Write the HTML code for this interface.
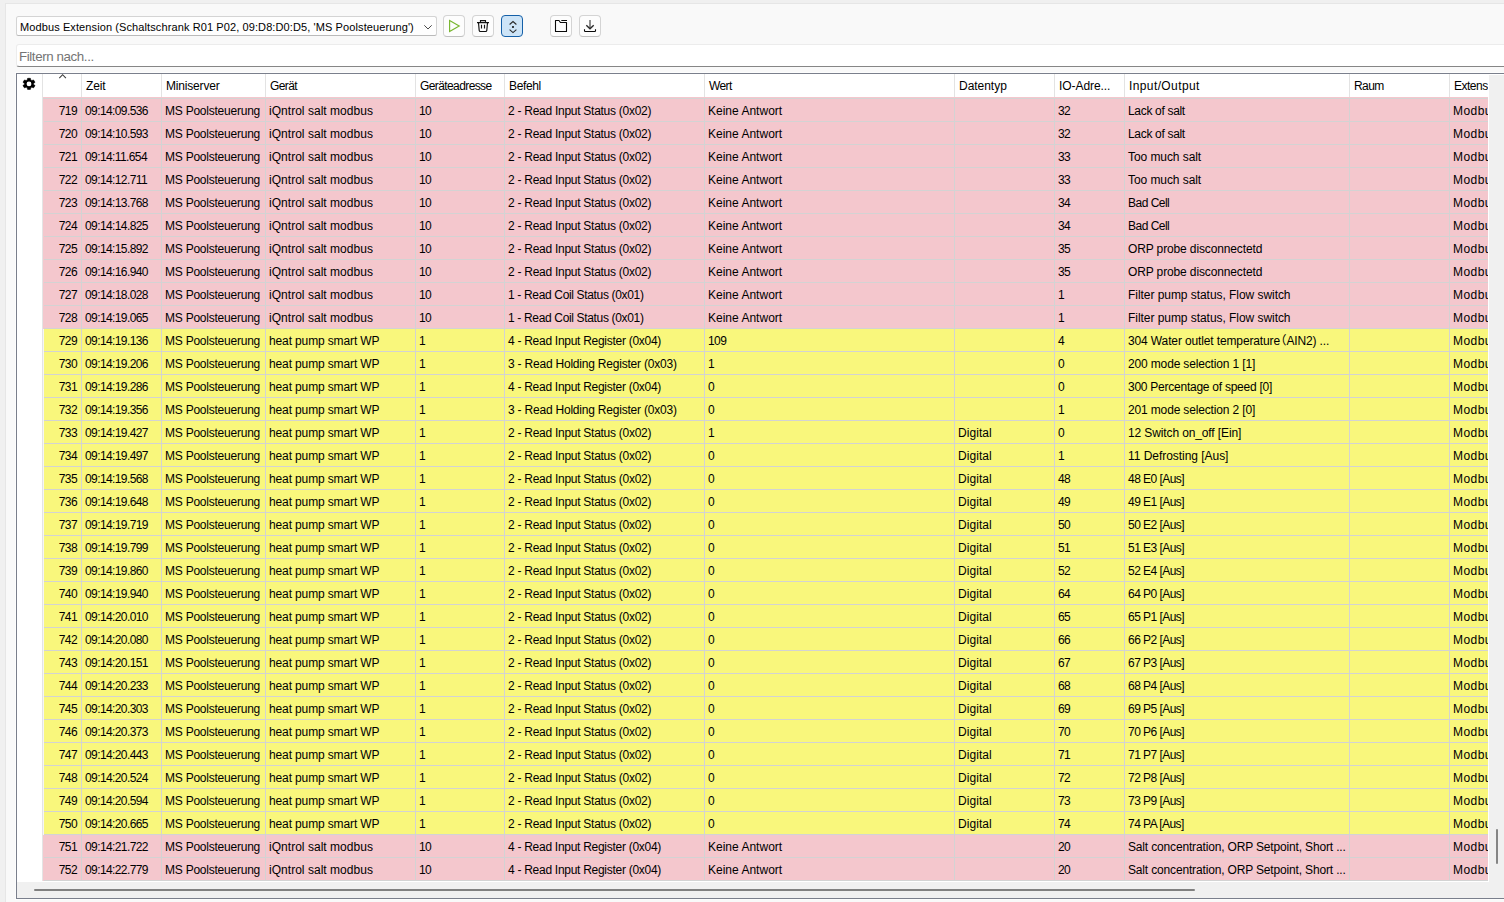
<!DOCTYPE html><html lang="de"><head><meta charset="utf-8"><title>Modbus Monitor</title><style>

*{box-sizing:border-box;margin:0;padding:0}
html,body{width:1504px;height:902px;overflow:hidden;background:#f0f0f0}
body{position:relative;font-family:"Liberation Sans","Noto Sans CJK SC",sans-serif;font-size:12px;color:#000;letter-spacing:-0.15px}
.panel{position:absolute;left:5px;top:3px;width:1510px;height:910px;background:#f9f9f9;border:1px solid #e6e6e6}
.combo{position:absolute;left:16px;top:16px;width:421px;height:20px;background:#fefefe;border:1px solid #d4d4d4;border-bottom-color:#bababa;border-radius:2.5px;line-height:18px;padding:1px 0 0 3px;white-space:nowrap;overflow:hidden;letter-spacing:0.103px;font-size:11px}
.btn{position:absolute;top:15px;width:22px;height:22px;background:#fdfdfd;border:1px solid #d4d4d4;border-bottom-color:#c0c0c0;border-radius:4px}
.btn.on{background:#cde4f7;border:1.5px solid #1560a8}
.ic{position:absolute;top:15px}
.filter{position:absolute;left:16px;top:44px;width:1500px;height:23px;background:#fff;border:1px solid #ececec;border-bottom:1px solid #868686;border-radius:3px 0 0 3px;line-height:21px;padding:1px 0 0 2px;color:#747474;font-size:13.33px;letter-spacing:-0.4px}
.table{position:absolute;left:16px;top:73px;width:1500px;height:826px;background:#fff;border:1px solid #7a7f8c;box-shadow:0 0 0 1px #fdfdfd}
.hd{position:absolute;top:74px;height:23px;line-height:23px;white-space:nowrap;overflow:hidden;border-left:1px solid #e3e3e3;padding:1px 0 0 4px;background:#fff}
.row{position:absolute;left:43px;width:1445px;height:23px;overflow:hidden}
.row.y{box-shadow:inset 1px 0 0 #f6f6f4}
.row i{position:absolute;left:1px;top:22px;width:100%;height:1px;background:#d3d3d3}
.c{position:absolute;top:0;height:22px;line-height:22px;white-space:nowrap;overflow:hidden;border-left:1px solid #d3d3d3;padding:1px 0 0 3px}
.c.n{border-left:none;text-align:right;padding:1px 4px 0 0}
.vs{position:absolute;left:1489px;top:75px;width:15px;height:823px;background:#f0f0f0}
.hs{position:absolute;left:17px;top:882px;width:1487px;height:16px;background:#f0f0f0}

</style></head><body>
<div class="panel"></div>
<div class="combo">Modbus Extension (Schaltschrank R01 P02, 09:D8:D0:D5, 'MS Poolsteuerung')</div>
<svg style="position:absolute;left:422px;top:22px" width="12" height="10" viewBox="0 0 12 10"><path d="M2.3 3.3 L6 7 L9.7 3.3" fill="none" stroke="#4a4a4a" stroke-width="1"/></svg>
<div class="btn" style="left:443px"></div>
<div class="btn" style="left:472px"></div>
<div class="btn on" style="left:501px"></div>
<div class="btn" style="left:550px"></div>
<div class="btn" style="left:579px"></div>
<svg class="ic" style="left:443px" width="22" height="22" viewBox="0 0 22 22"><path d="M6.6 5.6 L16.2 11 L6.6 16.4 Z" fill="none" stroke="#78b62e" stroke-width="1.15" stroke-linejoin="miter"/></svg>
<svg class="ic" style="left:472px" width="22" height="22" viewBox="0 0 22 22"><path d="M5 7.6H17M8.5 7.4V5.6H13.5V7.4M6.5 7.8 L7.2 15.4 Q7.3 16.5 8.4 16.5 H13.6 Q14.7 16.5 14.8 15.4 L15.5 7.8M9.5 9.8V13.6M12.5 9.8V13.6" fill="none" stroke="#111" stroke-width="1.15"/></svg>
<svg class="ic" style="left:501px" width="22" height="22" viewBox="0 0 22 22"><path d="M8.6 9.5 L12 6.5 L15.4 9.5M8.6 14.6 L12 17.6 L15.4 14.6" fill="none" stroke="#2a2a2a" stroke-width="1.1"/><circle cx="12" cy="12.05" r="1.05" fill="#111"/></svg>
<svg class="ic" style="left:550px" width="22" height="22" viewBox="0 0 22 22"><path d="M5.5 5.5H9L10.4 7.5H16.5V16.5H5.5Z M11.3 5.5H17" fill="none" stroke="#0a0a0a" stroke-width="1.1" stroke-linejoin="round"/></svg>
<svg class="ic" style="left:579px" width="22" height="22" viewBox="0 0 22 22"><path d="M11 5V13" fill="none" stroke="#6a6a6a" stroke-width="1.5"/><path d="M7.3 10.2 L11 13.7 L14.7 10.2" fill="none" stroke="#2a2a2a" stroke-width="1.4"/><path d="M5.5 14.2V15.8Q5.5 16.5 6.2 16.5H15.8Q16.5 16.5 16.5 15.8V14.2" fill="none" stroke="#0a0a0a" stroke-width="1.1"/></svg>
<div class="filter">Filtern nach...</div>
<div class="table"></div>
<svg style="position:absolute;left:22px;top:77px" width="14" height="14" viewBox="0 0 14 14"><g transform="translate(7.0 6.9) scale(0.64 0.583) translate(-12 -12)"><path fill="#000" stroke="#000" stroke-width="0.9" stroke-linejoin="round" d="M19.14 12.94c.04-.3.06-.61.06-.94 0-.32-.02-.64-.07-.94l2.03-1.58a.49.49 0 0 0 .12-.61l-1.92-3.32a.488.488 0 0 0-.59-.22l-2.39.96c-.5-.38-1.03-.7-1.62-.94l-.36-2.54a.484.484 0 0 0-.48-.41h-3.84c-.24 0-.43.17-.47.41l-.36 2.54c-.59.24-1.13.57-1.62.94l-2.39-.96c-.22-.08-.47 0-.59.22L2.74 8.87c-.12.21-.08.47.12.61l2.03 1.58c-.05.3-.09.63-.09.94s.02.64.07.94l-2.03 1.58a.49.49 0 0 0-.12.61l1.92 3.32c.12.22.37.29.59.22l2.39-.96c.5.38 1.03.7 1.62.94l.36 2.54c.05.24.24.41.48.41h3.84c.24 0 .44-.17.47-.41l.36-2.54c.59-.24 1.13-.56 1.62-.94l2.39.96c.22.08.47 0 .59-.22l1.92-3.32c.12-.22.07-.47-.12-.61l-2.01-1.58z"/><ellipse cx="12" cy="12" rx="3.75" ry="4.1" fill="#fff"/></g></svg>
<div class="hd" style="left:42px;width:39px"></div>
<div class="hd" style="left:81px;width:80px;letter-spacing:-0.17px">Zeit</div>
<div class="hd" style="left:161px;width:104px;letter-spacing:-0.18px">Miniserver</div>
<div class="hd" style="left:265px;width:150px;letter-spacing:-0.60px">Gerät</div>
<div class="hd" style="left:415px;width:89px;letter-spacing:-0.60px">Geräteadresse</div>
<div class="hd" style="left:504px;width:200px;letter-spacing:-0.37px">Befehl</div>
<div class="hd" style="left:704px;width:250px;letter-spacing:-0.60px">Wert</div>
<div class="hd" style="left:954px;width:100px;letter-spacing:-0.03px">Datentyp</div>
<div class="hd" style="left:1054px;width:70px;letter-spacing:-0.07px">IO-Adre...</div>
<div class="hd" style="left:1124px;width:225px;letter-spacing:0.39px">Input/Output</div>
<div class="hd" style="left:1349px;width:100px;letter-spacing:-0.60px">Raum</div>
<div class="hd" style="left:1449px;width:39px;letter-spacing:-0.50px">Extension</div>
<svg style="position:absolute;left:57px;top:72px" width="12" height="8" viewBox="0 0 12 8"><path d="M2.3 6.2 L5.6 2.7 L8.9 6.2" fill="none" stroke="#3c3c3c" stroke-width="1.1"/></svg>
<div style="position:absolute;left:42px;top:97px;width:1px;height:784px;background:#e4e4e4"></div>
<div style="position:absolute;left:43px;top:97px;width:1445px;height:1px;background:#f4c7cd"></div>
<div style="position:absolute;left:43px;top:98px;width:1445px;height:1px;background:#d4d4d4"></div>
<div class="row" style="top:99px;background:#f4c7cd"><div class="c n" style="left:0;width:38px;letter-spacing:-0.60px">719</div><div class="c" style="left:38px;width:80px;letter-spacing:-0.60px">09:14:09.536</div><div class="c" style="left:118px;width:104px;letter-spacing:-0.23px">MS Poolsteuerung</div><div class="c" style="left:222px;width:150px;letter-spacing:0.03px">iQntrol salt modbus</div><div class="c" style="left:372px;width:89px;letter-spacing:-0.60px">10</div><div class="c" style="left:461px;width:200px;letter-spacing:-0.27px">2 - Read Input Status (0x02)</div><div class="c" style="left:661px;width:250px;letter-spacing:0.01px">Keine Antwort</div><div class="c" style="left:911px;width:100px"></div><div class="c" style="left:1011px;width:70px;letter-spacing:-0.60px">32</div><div class="c" style="left:1081px;width:225px;letter-spacing:-0.32px">Lack of salt</div><div class="c" style="left:1306px;width:100px"></div><div class="c" style="left:1406px;width:39px;letter-spacing:0.45px">Modbus</div><i></i></div>
<div class="row" style="top:122px;background:#f4c7cd"><div class="c n" style="left:0;width:38px;letter-spacing:-0.60px">720</div><div class="c" style="left:38px;width:80px;letter-spacing:-0.60px">09:14:10.593</div><div class="c" style="left:118px;width:104px;letter-spacing:-0.23px">MS Poolsteuerung</div><div class="c" style="left:222px;width:150px;letter-spacing:0.03px">iQntrol salt modbus</div><div class="c" style="left:372px;width:89px;letter-spacing:-0.60px">10</div><div class="c" style="left:461px;width:200px;letter-spacing:-0.27px">2 - Read Input Status (0x02)</div><div class="c" style="left:661px;width:250px;letter-spacing:0.01px">Keine Antwort</div><div class="c" style="left:911px;width:100px"></div><div class="c" style="left:1011px;width:70px;letter-spacing:-0.60px">32</div><div class="c" style="left:1081px;width:225px;letter-spacing:-0.32px">Lack of salt</div><div class="c" style="left:1306px;width:100px"></div><div class="c" style="left:1406px;width:39px;letter-spacing:0.45px">Modbus</div><i></i></div>
<div class="row" style="top:145px;background:#f4c7cd"><div class="c n" style="left:0;width:38px;letter-spacing:-0.60px">721</div><div class="c" style="left:38px;width:80px;letter-spacing:-0.60px">09:14:11.654</div><div class="c" style="left:118px;width:104px;letter-spacing:-0.23px">MS Poolsteuerung</div><div class="c" style="left:222px;width:150px;letter-spacing:0.03px">iQntrol salt modbus</div><div class="c" style="left:372px;width:89px;letter-spacing:-0.60px">10</div><div class="c" style="left:461px;width:200px;letter-spacing:-0.27px">2 - Read Input Status (0x02)</div><div class="c" style="left:661px;width:250px;letter-spacing:0.01px">Keine Antwort</div><div class="c" style="left:911px;width:100px"></div><div class="c" style="left:1011px;width:70px;letter-spacing:-0.60px">33</div><div class="c" style="left:1081px;width:225px;letter-spacing:-0.07px">Too much salt</div><div class="c" style="left:1306px;width:100px"></div><div class="c" style="left:1406px;width:39px;letter-spacing:0.45px">Modbus</div><i></i></div>
<div class="row" style="top:168px;background:#f4c7cd"><div class="c n" style="left:0;width:38px;letter-spacing:-0.60px">722</div><div class="c" style="left:38px;width:80px;letter-spacing:-0.60px">09:14:12.711</div><div class="c" style="left:118px;width:104px;letter-spacing:-0.23px">MS Poolsteuerung</div><div class="c" style="left:222px;width:150px;letter-spacing:0.03px">iQntrol salt modbus</div><div class="c" style="left:372px;width:89px;letter-spacing:-0.60px">10</div><div class="c" style="left:461px;width:200px;letter-spacing:-0.27px">2 - Read Input Status (0x02)</div><div class="c" style="left:661px;width:250px;letter-spacing:0.01px">Keine Antwort</div><div class="c" style="left:911px;width:100px"></div><div class="c" style="left:1011px;width:70px;letter-spacing:-0.60px">33</div><div class="c" style="left:1081px;width:225px;letter-spacing:-0.07px">Too much salt</div><div class="c" style="left:1306px;width:100px"></div><div class="c" style="left:1406px;width:39px;letter-spacing:0.45px">Modbus</div><i></i></div>
<div class="row" style="top:191px;background:#f4c7cd"><div class="c n" style="left:0;width:38px;letter-spacing:-0.60px">723</div><div class="c" style="left:38px;width:80px;letter-spacing:-0.60px">09:14:13.768</div><div class="c" style="left:118px;width:104px;letter-spacing:-0.23px">MS Poolsteuerung</div><div class="c" style="left:222px;width:150px;letter-spacing:0.03px">iQntrol salt modbus</div><div class="c" style="left:372px;width:89px;letter-spacing:-0.60px">10</div><div class="c" style="left:461px;width:200px;letter-spacing:-0.27px">2 - Read Input Status (0x02)</div><div class="c" style="left:661px;width:250px;letter-spacing:0.01px">Keine Antwort</div><div class="c" style="left:911px;width:100px"></div><div class="c" style="left:1011px;width:70px;letter-spacing:-0.60px">34</div><div class="c" style="left:1081px;width:225px;letter-spacing:-0.51px">Bad Cell</div><div class="c" style="left:1306px;width:100px"></div><div class="c" style="left:1406px;width:39px;letter-spacing:0.45px">Modbus</div><i></i></div>
<div class="row" style="top:214px;background:#f4c7cd"><div class="c n" style="left:0;width:38px;letter-spacing:-0.60px">724</div><div class="c" style="left:38px;width:80px;letter-spacing:-0.60px">09:14:14.825</div><div class="c" style="left:118px;width:104px;letter-spacing:-0.23px">MS Poolsteuerung</div><div class="c" style="left:222px;width:150px;letter-spacing:0.03px">iQntrol salt modbus</div><div class="c" style="left:372px;width:89px;letter-spacing:-0.60px">10</div><div class="c" style="left:461px;width:200px;letter-spacing:-0.27px">2 - Read Input Status (0x02)</div><div class="c" style="left:661px;width:250px;letter-spacing:0.01px">Keine Antwort</div><div class="c" style="left:911px;width:100px"></div><div class="c" style="left:1011px;width:70px;letter-spacing:-0.60px">34</div><div class="c" style="left:1081px;width:225px;letter-spacing:-0.51px">Bad Cell</div><div class="c" style="left:1306px;width:100px"></div><div class="c" style="left:1406px;width:39px;letter-spacing:0.45px">Modbus</div><i></i></div>
<div class="row" style="top:237px;background:#f4c7cd"><div class="c n" style="left:0;width:38px;letter-spacing:-0.60px">725</div><div class="c" style="left:38px;width:80px;letter-spacing:-0.60px">09:14:15.892</div><div class="c" style="left:118px;width:104px;letter-spacing:-0.23px">MS Poolsteuerung</div><div class="c" style="left:222px;width:150px;letter-spacing:0.03px">iQntrol salt modbus</div><div class="c" style="left:372px;width:89px;letter-spacing:-0.60px">10</div><div class="c" style="left:461px;width:200px;letter-spacing:-0.27px">2 - Read Input Status (0x02)</div><div class="c" style="left:661px;width:250px;letter-spacing:0.01px">Keine Antwort</div><div class="c" style="left:911px;width:100px"></div><div class="c" style="left:1011px;width:70px;letter-spacing:-0.60px">35</div><div class="c" style="left:1081px;width:225px;letter-spacing:-0.13px">ORP probe disconnectetd</div><div class="c" style="left:1306px;width:100px"></div><div class="c" style="left:1406px;width:39px;letter-spacing:0.45px">Modbus</div><i></i></div>
<div class="row" style="top:260px;background:#f4c7cd"><div class="c n" style="left:0;width:38px;letter-spacing:-0.60px">726</div><div class="c" style="left:38px;width:80px;letter-spacing:-0.60px">09:14:16.940</div><div class="c" style="left:118px;width:104px;letter-spacing:-0.23px">MS Poolsteuerung</div><div class="c" style="left:222px;width:150px;letter-spacing:0.03px">iQntrol salt modbus</div><div class="c" style="left:372px;width:89px;letter-spacing:-0.60px">10</div><div class="c" style="left:461px;width:200px;letter-spacing:-0.27px">2 - Read Input Status (0x02)</div><div class="c" style="left:661px;width:250px;letter-spacing:0.01px">Keine Antwort</div><div class="c" style="left:911px;width:100px"></div><div class="c" style="left:1011px;width:70px;letter-spacing:-0.60px">35</div><div class="c" style="left:1081px;width:225px;letter-spacing:-0.13px">ORP probe disconnectetd</div><div class="c" style="left:1306px;width:100px"></div><div class="c" style="left:1406px;width:39px;letter-spacing:0.45px">Modbus</div><i></i></div>
<div class="row" style="top:283px;background:#f4c7cd"><div class="c n" style="left:0;width:38px;letter-spacing:-0.60px">727</div><div class="c" style="left:38px;width:80px;letter-spacing:-0.60px">09:14:18.028</div><div class="c" style="left:118px;width:104px;letter-spacing:-0.23px">MS Poolsteuerung</div><div class="c" style="left:222px;width:150px;letter-spacing:0.03px">iQntrol salt modbus</div><div class="c" style="left:372px;width:89px;letter-spacing:-0.60px">10</div><div class="c" style="left:461px;width:200px;letter-spacing:-0.34px">1 - Read Coil Status (0x01)</div><div class="c" style="left:661px;width:250px;letter-spacing:0.01px">Keine Antwort</div><div class="c" style="left:911px;width:100px"></div><div class="c" style="left:1011px;width:70px;letter-spacing:-0.60px">1</div><div class="c" style="left:1081px;width:225px;letter-spacing:-0.05px">Filter pump status, Flow switch</div><div class="c" style="left:1306px;width:100px"></div><div class="c" style="left:1406px;width:39px;letter-spacing:0.45px">Modbus</div><i></i></div>
<div class="row" style="top:306px;background:#f4c7cd"><div class="c n" style="left:0;width:38px;letter-spacing:-0.60px">728</div><div class="c" style="left:38px;width:80px;letter-spacing:-0.60px">09:14:19.065</div><div class="c" style="left:118px;width:104px;letter-spacing:-0.23px">MS Poolsteuerung</div><div class="c" style="left:222px;width:150px;letter-spacing:0.03px">iQntrol salt modbus</div><div class="c" style="left:372px;width:89px;letter-spacing:-0.60px">10</div><div class="c" style="left:461px;width:200px;letter-spacing:-0.34px">1 - Read Coil Status (0x01)</div><div class="c" style="left:661px;width:250px;letter-spacing:0.01px">Keine Antwort</div><div class="c" style="left:911px;width:100px"></div><div class="c" style="left:1011px;width:70px;letter-spacing:-0.60px">1</div><div class="c" style="left:1081px;width:225px;letter-spacing:-0.05px">Filter pump status, Flow switch</div><div class="c" style="left:1306px;width:100px"></div><div class="c" style="left:1406px;width:39px;letter-spacing:0.45px">Modbus</div><i></i></div>
<div class="row y" style="top:329px;background:#f9f77c"><div class="c n" style="left:0;width:38px;letter-spacing:-0.60px">729</div><div class="c" style="left:38px;width:80px;letter-spacing:-0.60px">09:14:19.136</div><div class="c" style="left:118px;width:104px;letter-spacing:-0.23px">MS Poolsteuerung</div><div class="c" style="left:222px;width:150px;letter-spacing:-0.13px">heat pump smart WP</div><div class="c" style="left:372px;width:89px;letter-spacing:-0.60px">1</div><div class="c" style="left:461px;width:200px;letter-spacing:-0.28px">4 - Read Input Register (0x04)</div><div class="c" style="left:661px;width:250px;letter-spacing:-0.60px">109</div><div class="c" style="left:911px;width:100px"></div><div class="c" style="left:1011px;width:70px;letter-spacing:-0.60px">4</div><div class="c" style="left:1081px;width:225px;letter-spacing:-0.13px">304 Water outlet temperature<span style="margin-left:-5.5px">（</span>AIN2) ...</div><div class="c" style="left:1306px;width:100px"></div><div class="c" style="left:1406px;width:39px;letter-spacing:0.45px">Modbus</div><i></i></div>
<div class="row y" style="top:352px;background:#f9f77c"><div class="c n" style="left:0;width:38px;letter-spacing:-0.60px">730</div><div class="c" style="left:38px;width:80px;letter-spacing:-0.60px">09:14:19.206</div><div class="c" style="left:118px;width:104px;letter-spacing:-0.23px">MS Poolsteuerung</div><div class="c" style="left:222px;width:150px;letter-spacing:-0.13px">heat pump smart WP</div><div class="c" style="left:372px;width:89px;letter-spacing:-0.60px">1</div><div class="c" style="left:461px;width:200px;letter-spacing:-0.21px">3 - Read Holding Register (0x03)</div><div class="c" style="left:661px;width:250px;letter-spacing:-0.60px">1</div><div class="c" style="left:911px;width:100px"></div><div class="c" style="left:1011px;width:70px;letter-spacing:-0.60px">0</div><div class="c" style="left:1081px;width:225px;letter-spacing:-0.15px">200 mode selection 1 [1]</div><div class="c" style="left:1306px;width:100px"></div><div class="c" style="left:1406px;width:39px;letter-spacing:0.45px">Modbus</div><i></i></div>
<div class="row y" style="top:375px;background:#f9f77c"><div class="c n" style="left:0;width:38px;letter-spacing:-0.60px">731</div><div class="c" style="left:38px;width:80px;letter-spacing:-0.60px">09:14:19.286</div><div class="c" style="left:118px;width:104px;letter-spacing:-0.23px">MS Poolsteuerung</div><div class="c" style="left:222px;width:150px;letter-spacing:-0.13px">heat pump smart WP</div><div class="c" style="left:372px;width:89px;letter-spacing:-0.60px">1</div><div class="c" style="left:461px;width:200px;letter-spacing:-0.28px">4 - Read Input Register (0x04)</div><div class="c" style="left:661px;width:250px;letter-spacing:-0.60px">0</div><div class="c" style="left:911px;width:100px"></div><div class="c" style="left:1011px;width:70px;letter-spacing:-0.60px">0</div><div class="c" style="left:1081px;width:225px;letter-spacing:-0.25px">300 Percentage of speed [0]</div><div class="c" style="left:1306px;width:100px"></div><div class="c" style="left:1406px;width:39px;letter-spacing:0.45px">Modbus</div><i></i></div>
<div class="row y" style="top:398px;background:#f9f77c"><div class="c n" style="left:0;width:38px;letter-spacing:-0.60px">732</div><div class="c" style="left:38px;width:80px;letter-spacing:-0.60px">09:14:19.356</div><div class="c" style="left:118px;width:104px;letter-spacing:-0.23px">MS Poolsteuerung</div><div class="c" style="left:222px;width:150px;letter-spacing:-0.13px">heat pump smart WP</div><div class="c" style="left:372px;width:89px;letter-spacing:-0.60px">1</div><div class="c" style="left:461px;width:200px;letter-spacing:-0.21px">3 - Read Holding Register (0x03)</div><div class="c" style="left:661px;width:250px;letter-spacing:-0.60px">0</div><div class="c" style="left:911px;width:100px"></div><div class="c" style="left:1011px;width:70px;letter-spacing:-0.60px">1</div><div class="c" style="left:1081px;width:225px;letter-spacing:-0.15px">201 mode selection 2 [0]</div><div class="c" style="left:1306px;width:100px"></div><div class="c" style="left:1406px;width:39px;letter-spacing:0.45px">Modbus</div><i></i></div>
<div class="row y" style="top:421px;background:#f9f77c"><div class="c n" style="left:0;width:38px;letter-spacing:-0.60px">733</div><div class="c" style="left:38px;width:80px;letter-spacing:-0.60px">09:14:19.427</div><div class="c" style="left:118px;width:104px;letter-spacing:-0.23px">MS Poolsteuerung</div><div class="c" style="left:222px;width:150px;letter-spacing:-0.13px">heat pump smart WP</div><div class="c" style="left:372px;width:89px;letter-spacing:-0.60px">1</div><div class="c" style="left:461px;width:200px;letter-spacing:-0.27px">2 - Read Input Status (0x02)</div><div class="c" style="left:661px;width:250px;letter-spacing:-0.60px">1</div><div class="c" style="left:911px;width:100px;letter-spacing:0.07px">Digital</div><div class="c" style="left:1011px;width:70px;letter-spacing:-0.60px">0</div><div class="c" style="left:1081px;width:225px;letter-spacing:-0.12px">12 Switch on_off [Ein]</div><div class="c" style="left:1306px;width:100px"></div><div class="c" style="left:1406px;width:39px;letter-spacing:0.45px">Modbus</div><i></i></div>
<div class="row y" style="top:444px;background:#f9f77c"><div class="c n" style="left:0;width:38px;letter-spacing:-0.60px">734</div><div class="c" style="left:38px;width:80px;letter-spacing:-0.60px">09:14:19.497</div><div class="c" style="left:118px;width:104px;letter-spacing:-0.23px">MS Poolsteuerung</div><div class="c" style="left:222px;width:150px;letter-spacing:-0.13px">heat pump smart WP</div><div class="c" style="left:372px;width:89px;letter-spacing:-0.60px">1</div><div class="c" style="left:461px;width:200px;letter-spacing:-0.27px">2 - Read Input Status (0x02)</div><div class="c" style="left:661px;width:250px;letter-spacing:-0.60px">0</div><div class="c" style="left:911px;width:100px;letter-spacing:0.07px">Digital</div><div class="c" style="left:1011px;width:70px;letter-spacing:-0.60px">1</div><div class="c" style="left:1081px;width:225px;letter-spacing:-0.04px">11 Defrosting [Aus]</div><div class="c" style="left:1306px;width:100px"></div><div class="c" style="left:1406px;width:39px;letter-spacing:0.45px">Modbus</div><i></i></div>
<div class="row y" style="top:467px;background:#f9f77c"><div class="c n" style="left:0;width:38px;letter-spacing:-0.60px">735</div><div class="c" style="left:38px;width:80px;letter-spacing:-0.60px">09:14:19.568</div><div class="c" style="left:118px;width:104px;letter-spacing:-0.23px">MS Poolsteuerung</div><div class="c" style="left:222px;width:150px;letter-spacing:-0.13px">heat pump smart WP</div><div class="c" style="left:372px;width:89px;letter-spacing:-0.60px">1</div><div class="c" style="left:461px;width:200px;letter-spacing:-0.27px">2 - Read Input Status (0x02)</div><div class="c" style="left:661px;width:250px;letter-spacing:-0.60px">0</div><div class="c" style="left:911px;width:100px;letter-spacing:0.07px">Digital</div><div class="c" style="left:1011px;width:70px;letter-spacing:-0.60px">48</div><div class="c" style="left:1081px;width:225px;letter-spacing:-0.54px">48 E0 [Aus]</div><div class="c" style="left:1306px;width:100px"></div><div class="c" style="left:1406px;width:39px;letter-spacing:0.45px">Modbus</div><i></i></div>
<div class="row y" style="top:490px;background:#f9f77c"><div class="c n" style="left:0;width:38px;letter-spacing:-0.60px">736</div><div class="c" style="left:38px;width:80px;letter-spacing:-0.60px">09:14:19.648</div><div class="c" style="left:118px;width:104px;letter-spacing:-0.23px">MS Poolsteuerung</div><div class="c" style="left:222px;width:150px;letter-spacing:-0.13px">heat pump smart WP</div><div class="c" style="left:372px;width:89px;letter-spacing:-0.60px">1</div><div class="c" style="left:461px;width:200px;letter-spacing:-0.27px">2 - Read Input Status (0x02)</div><div class="c" style="left:661px;width:250px;letter-spacing:-0.60px">0</div><div class="c" style="left:911px;width:100px;letter-spacing:0.07px">Digital</div><div class="c" style="left:1011px;width:70px;letter-spacing:-0.60px">49</div><div class="c" style="left:1081px;width:225px;letter-spacing:-0.54px">49 E1 [Aus]</div><div class="c" style="left:1306px;width:100px"></div><div class="c" style="left:1406px;width:39px;letter-spacing:0.45px">Modbus</div><i></i></div>
<div class="row y" style="top:513px;background:#f9f77c"><div class="c n" style="left:0;width:38px;letter-spacing:-0.60px">737</div><div class="c" style="left:38px;width:80px;letter-spacing:-0.60px">09:14:19.719</div><div class="c" style="left:118px;width:104px;letter-spacing:-0.23px">MS Poolsteuerung</div><div class="c" style="left:222px;width:150px;letter-spacing:-0.13px">heat pump smart WP</div><div class="c" style="left:372px;width:89px;letter-spacing:-0.60px">1</div><div class="c" style="left:461px;width:200px;letter-spacing:-0.27px">2 - Read Input Status (0x02)</div><div class="c" style="left:661px;width:250px;letter-spacing:-0.60px">0</div><div class="c" style="left:911px;width:100px;letter-spacing:0.07px">Digital</div><div class="c" style="left:1011px;width:70px;letter-spacing:-0.60px">50</div><div class="c" style="left:1081px;width:225px;letter-spacing:-0.54px">50 E2 [Aus]</div><div class="c" style="left:1306px;width:100px"></div><div class="c" style="left:1406px;width:39px;letter-spacing:0.45px">Modbus</div><i></i></div>
<div class="row y" style="top:536px;background:#f9f77c"><div class="c n" style="left:0;width:38px;letter-spacing:-0.60px">738</div><div class="c" style="left:38px;width:80px;letter-spacing:-0.60px">09:14:19.799</div><div class="c" style="left:118px;width:104px;letter-spacing:-0.23px">MS Poolsteuerung</div><div class="c" style="left:222px;width:150px;letter-spacing:-0.13px">heat pump smart WP</div><div class="c" style="left:372px;width:89px;letter-spacing:-0.60px">1</div><div class="c" style="left:461px;width:200px;letter-spacing:-0.27px">2 - Read Input Status (0x02)</div><div class="c" style="left:661px;width:250px;letter-spacing:-0.60px">0</div><div class="c" style="left:911px;width:100px;letter-spacing:0.07px">Digital</div><div class="c" style="left:1011px;width:70px;letter-spacing:-0.60px">51</div><div class="c" style="left:1081px;width:225px;letter-spacing:-0.54px">51 E3 [Aus]</div><div class="c" style="left:1306px;width:100px"></div><div class="c" style="left:1406px;width:39px;letter-spacing:0.45px">Modbus</div><i></i></div>
<div class="row y" style="top:559px;background:#f9f77c"><div class="c n" style="left:0;width:38px;letter-spacing:-0.60px">739</div><div class="c" style="left:38px;width:80px;letter-spacing:-0.60px">09:14:19.860</div><div class="c" style="left:118px;width:104px;letter-spacing:-0.23px">MS Poolsteuerung</div><div class="c" style="left:222px;width:150px;letter-spacing:-0.13px">heat pump smart WP</div><div class="c" style="left:372px;width:89px;letter-spacing:-0.60px">1</div><div class="c" style="left:461px;width:200px;letter-spacing:-0.27px">2 - Read Input Status (0x02)</div><div class="c" style="left:661px;width:250px;letter-spacing:-0.60px">0</div><div class="c" style="left:911px;width:100px;letter-spacing:0.07px">Digital</div><div class="c" style="left:1011px;width:70px;letter-spacing:-0.60px">52</div><div class="c" style="left:1081px;width:225px;letter-spacing:-0.54px">52 E4 [Aus]</div><div class="c" style="left:1306px;width:100px"></div><div class="c" style="left:1406px;width:39px;letter-spacing:0.45px">Modbus</div><i></i></div>
<div class="row y" style="top:582px;background:#f9f77c"><div class="c n" style="left:0;width:38px;letter-spacing:-0.60px">740</div><div class="c" style="left:38px;width:80px;letter-spacing:-0.60px">09:14:19.940</div><div class="c" style="left:118px;width:104px;letter-spacing:-0.23px">MS Poolsteuerung</div><div class="c" style="left:222px;width:150px;letter-spacing:-0.13px">heat pump smart WP</div><div class="c" style="left:372px;width:89px;letter-spacing:-0.60px">1</div><div class="c" style="left:461px;width:200px;letter-spacing:-0.27px">2 - Read Input Status (0x02)</div><div class="c" style="left:661px;width:250px;letter-spacing:-0.60px">0</div><div class="c" style="left:911px;width:100px;letter-spacing:0.07px">Digital</div><div class="c" style="left:1011px;width:70px;letter-spacing:-0.60px">64</div><div class="c" style="left:1081px;width:225px;letter-spacing:-0.54px">64 P0 [Aus]</div><div class="c" style="left:1306px;width:100px"></div><div class="c" style="left:1406px;width:39px;letter-spacing:0.45px">Modbus</div><i></i></div>
<div class="row y" style="top:605px;background:#f9f77c"><div class="c n" style="left:0;width:38px;letter-spacing:-0.60px">741</div><div class="c" style="left:38px;width:80px;letter-spacing:-0.60px">09:14:20.010</div><div class="c" style="left:118px;width:104px;letter-spacing:-0.23px">MS Poolsteuerung</div><div class="c" style="left:222px;width:150px;letter-spacing:-0.13px">heat pump smart WP</div><div class="c" style="left:372px;width:89px;letter-spacing:-0.60px">1</div><div class="c" style="left:461px;width:200px;letter-spacing:-0.27px">2 - Read Input Status (0x02)</div><div class="c" style="left:661px;width:250px;letter-spacing:-0.60px">0</div><div class="c" style="left:911px;width:100px;letter-spacing:0.07px">Digital</div><div class="c" style="left:1011px;width:70px;letter-spacing:-0.60px">65</div><div class="c" style="left:1081px;width:225px;letter-spacing:-0.54px">65 P1 [Aus]</div><div class="c" style="left:1306px;width:100px"></div><div class="c" style="left:1406px;width:39px;letter-spacing:0.45px">Modbus</div><i></i></div>
<div class="row y" style="top:628px;background:#f9f77c"><div class="c n" style="left:0;width:38px;letter-spacing:-0.60px">742</div><div class="c" style="left:38px;width:80px;letter-spacing:-0.60px">09:14:20.080</div><div class="c" style="left:118px;width:104px;letter-spacing:-0.23px">MS Poolsteuerung</div><div class="c" style="left:222px;width:150px;letter-spacing:-0.13px">heat pump smart WP</div><div class="c" style="left:372px;width:89px;letter-spacing:-0.60px">1</div><div class="c" style="left:461px;width:200px;letter-spacing:-0.27px">2 - Read Input Status (0x02)</div><div class="c" style="left:661px;width:250px;letter-spacing:-0.60px">0</div><div class="c" style="left:911px;width:100px;letter-spacing:0.07px">Digital</div><div class="c" style="left:1011px;width:70px;letter-spacing:-0.60px">66</div><div class="c" style="left:1081px;width:225px;letter-spacing:-0.54px">66 P2 [Aus]</div><div class="c" style="left:1306px;width:100px"></div><div class="c" style="left:1406px;width:39px;letter-spacing:0.45px">Modbus</div><i></i></div>
<div class="row y" style="top:651px;background:#f9f77c"><div class="c n" style="left:0;width:38px;letter-spacing:-0.60px">743</div><div class="c" style="left:38px;width:80px;letter-spacing:-0.60px">09:14:20.151</div><div class="c" style="left:118px;width:104px;letter-spacing:-0.23px">MS Poolsteuerung</div><div class="c" style="left:222px;width:150px;letter-spacing:-0.13px">heat pump smart WP</div><div class="c" style="left:372px;width:89px;letter-spacing:-0.60px">1</div><div class="c" style="left:461px;width:200px;letter-spacing:-0.27px">2 - Read Input Status (0x02)</div><div class="c" style="left:661px;width:250px;letter-spacing:-0.60px">0</div><div class="c" style="left:911px;width:100px;letter-spacing:0.07px">Digital</div><div class="c" style="left:1011px;width:70px;letter-spacing:-0.60px">67</div><div class="c" style="left:1081px;width:225px;letter-spacing:-0.54px">67 P3 [Aus]</div><div class="c" style="left:1306px;width:100px"></div><div class="c" style="left:1406px;width:39px;letter-spacing:0.45px">Modbus</div><i></i></div>
<div class="row y" style="top:674px;background:#f9f77c"><div class="c n" style="left:0;width:38px;letter-spacing:-0.60px">744</div><div class="c" style="left:38px;width:80px;letter-spacing:-0.60px">09:14:20.233</div><div class="c" style="left:118px;width:104px;letter-spacing:-0.23px">MS Poolsteuerung</div><div class="c" style="left:222px;width:150px;letter-spacing:-0.13px">heat pump smart WP</div><div class="c" style="left:372px;width:89px;letter-spacing:-0.60px">1</div><div class="c" style="left:461px;width:200px;letter-spacing:-0.27px">2 - Read Input Status (0x02)</div><div class="c" style="left:661px;width:250px;letter-spacing:-0.60px">0</div><div class="c" style="left:911px;width:100px;letter-spacing:0.07px">Digital</div><div class="c" style="left:1011px;width:70px;letter-spacing:-0.60px">68</div><div class="c" style="left:1081px;width:225px;letter-spacing:-0.54px">68 P4 [Aus]</div><div class="c" style="left:1306px;width:100px"></div><div class="c" style="left:1406px;width:39px;letter-spacing:0.45px">Modbus</div><i></i></div>
<div class="row y" style="top:697px;background:#f9f77c"><div class="c n" style="left:0;width:38px;letter-spacing:-0.60px">745</div><div class="c" style="left:38px;width:80px;letter-spacing:-0.60px">09:14:20.303</div><div class="c" style="left:118px;width:104px;letter-spacing:-0.23px">MS Poolsteuerung</div><div class="c" style="left:222px;width:150px;letter-spacing:-0.13px">heat pump smart WP</div><div class="c" style="left:372px;width:89px;letter-spacing:-0.60px">1</div><div class="c" style="left:461px;width:200px;letter-spacing:-0.27px">2 - Read Input Status (0x02)</div><div class="c" style="left:661px;width:250px;letter-spacing:-0.60px">0</div><div class="c" style="left:911px;width:100px;letter-spacing:0.07px">Digital</div><div class="c" style="left:1011px;width:70px;letter-spacing:-0.60px">69</div><div class="c" style="left:1081px;width:225px;letter-spacing:-0.54px">69 P5 [Aus]</div><div class="c" style="left:1306px;width:100px"></div><div class="c" style="left:1406px;width:39px;letter-spacing:0.45px">Modbus</div><i></i></div>
<div class="row y" style="top:720px;background:#f9f77c"><div class="c n" style="left:0;width:38px;letter-spacing:-0.60px">746</div><div class="c" style="left:38px;width:80px;letter-spacing:-0.60px">09:14:20.373</div><div class="c" style="left:118px;width:104px;letter-spacing:-0.23px">MS Poolsteuerung</div><div class="c" style="left:222px;width:150px;letter-spacing:-0.13px">heat pump smart WP</div><div class="c" style="left:372px;width:89px;letter-spacing:-0.60px">1</div><div class="c" style="left:461px;width:200px;letter-spacing:-0.27px">2 - Read Input Status (0x02)</div><div class="c" style="left:661px;width:250px;letter-spacing:-0.60px">0</div><div class="c" style="left:911px;width:100px;letter-spacing:0.07px">Digital</div><div class="c" style="left:1011px;width:70px;letter-spacing:-0.60px">70</div><div class="c" style="left:1081px;width:225px;letter-spacing:-0.54px">70 P6 [Aus]</div><div class="c" style="left:1306px;width:100px"></div><div class="c" style="left:1406px;width:39px;letter-spacing:0.45px">Modbus</div><i></i></div>
<div class="row y" style="top:743px;background:#f9f77c"><div class="c n" style="left:0;width:38px;letter-spacing:-0.60px">747</div><div class="c" style="left:38px;width:80px;letter-spacing:-0.60px">09:14:20.443</div><div class="c" style="left:118px;width:104px;letter-spacing:-0.23px">MS Poolsteuerung</div><div class="c" style="left:222px;width:150px;letter-spacing:-0.13px">heat pump smart WP</div><div class="c" style="left:372px;width:89px;letter-spacing:-0.60px">1</div><div class="c" style="left:461px;width:200px;letter-spacing:-0.27px">2 - Read Input Status (0x02)</div><div class="c" style="left:661px;width:250px;letter-spacing:-0.60px">0</div><div class="c" style="left:911px;width:100px;letter-spacing:0.07px">Digital</div><div class="c" style="left:1011px;width:70px;letter-spacing:-0.60px">71</div><div class="c" style="left:1081px;width:225px;letter-spacing:-0.54px">71 P7 [Aus]</div><div class="c" style="left:1306px;width:100px"></div><div class="c" style="left:1406px;width:39px;letter-spacing:0.45px">Modbus</div><i></i></div>
<div class="row y" style="top:766px;background:#f9f77c"><div class="c n" style="left:0;width:38px;letter-spacing:-0.60px">748</div><div class="c" style="left:38px;width:80px;letter-spacing:-0.60px">09:14:20.524</div><div class="c" style="left:118px;width:104px;letter-spacing:-0.23px">MS Poolsteuerung</div><div class="c" style="left:222px;width:150px;letter-spacing:-0.13px">heat pump smart WP</div><div class="c" style="left:372px;width:89px;letter-spacing:-0.60px">1</div><div class="c" style="left:461px;width:200px;letter-spacing:-0.27px">2 - Read Input Status (0x02)</div><div class="c" style="left:661px;width:250px;letter-spacing:-0.60px">0</div><div class="c" style="left:911px;width:100px;letter-spacing:0.07px">Digital</div><div class="c" style="left:1011px;width:70px;letter-spacing:-0.60px">72</div><div class="c" style="left:1081px;width:225px;letter-spacing:-0.54px">72 P8 [Aus]</div><div class="c" style="left:1306px;width:100px"></div><div class="c" style="left:1406px;width:39px;letter-spacing:0.45px">Modbus</div><i></i></div>
<div class="row y" style="top:789px;background:#f9f77c"><div class="c n" style="left:0;width:38px;letter-spacing:-0.60px">749</div><div class="c" style="left:38px;width:80px;letter-spacing:-0.60px">09:14:20.594</div><div class="c" style="left:118px;width:104px;letter-spacing:-0.23px">MS Poolsteuerung</div><div class="c" style="left:222px;width:150px;letter-spacing:-0.13px">heat pump smart WP</div><div class="c" style="left:372px;width:89px;letter-spacing:-0.60px">1</div><div class="c" style="left:461px;width:200px;letter-spacing:-0.27px">2 - Read Input Status (0x02)</div><div class="c" style="left:661px;width:250px;letter-spacing:-0.60px">0</div><div class="c" style="left:911px;width:100px;letter-spacing:0.07px">Digital</div><div class="c" style="left:1011px;width:70px;letter-spacing:-0.60px">73</div><div class="c" style="left:1081px;width:225px;letter-spacing:-0.54px">73 P9 [Aus]</div><div class="c" style="left:1306px;width:100px"></div><div class="c" style="left:1406px;width:39px;letter-spacing:0.45px">Modbus</div><i></i></div>
<div class="row y" style="top:812px;background:#f9f77c"><div class="c n" style="left:0;width:38px;letter-spacing:-0.60px">750</div><div class="c" style="left:38px;width:80px;letter-spacing:-0.60px">09:14:20.665</div><div class="c" style="left:118px;width:104px;letter-spacing:-0.23px">MS Poolsteuerung</div><div class="c" style="left:222px;width:150px;letter-spacing:-0.13px">heat pump smart WP</div><div class="c" style="left:372px;width:89px;letter-spacing:-0.60px">1</div><div class="c" style="left:461px;width:200px;letter-spacing:-0.27px">2 - Read Input Status (0x02)</div><div class="c" style="left:661px;width:250px;letter-spacing:-0.60px">0</div><div class="c" style="left:911px;width:100px;letter-spacing:0.07px">Digital</div><div class="c" style="left:1011px;width:70px;letter-spacing:-0.60px">74</div><div class="c" style="left:1081px;width:225px;letter-spacing:-0.54px">74 PA [Aus]</div><div class="c" style="left:1306px;width:100px"></div><div class="c" style="left:1406px;width:39px;letter-spacing:0.45px">Modbus</div><i></i></div>
<div class="row" style="top:835px;background:#f4c7cd"><div class="c n" style="left:0;width:38px;letter-spacing:-0.60px">751</div><div class="c" style="left:38px;width:80px;letter-spacing:-0.60px">09:14:21.722</div><div class="c" style="left:118px;width:104px;letter-spacing:-0.23px">MS Poolsteuerung</div><div class="c" style="left:222px;width:150px;letter-spacing:0.03px">iQntrol salt modbus</div><div class="c" style="left:372px;width:89px;letter-spacing:-0.60px">10</div><div class="c" style="left:461px;width:200px;letter-spacing:-0.28px">4 - Read Input Register (0x04)</div><div class="c" style="left:661px;width:250px;letter-spacing:0.01px">Keine Antwort</div><div class="c" style="left:911px;width:100px"></div><div class="c" style="left:1011px;width:70px;letter-spacing:-0.60px">20</div><div class="c" style="left:1081px;width:225px;letter-spacing:-0.16px">Salt concentration, ORP Setpoint, Short ...</div><div class="c" style="left:1306px;width:100px"></div><div class="c" style="left:1406px;width:39px;letter-spacing:0.45px">Modbus</div><i></i></div>
<div class="row" style="top:858px;background:#f4c7cd"><div class="c n" style="left:0;width:38px;letter-spacing:-0.60px">752</div><div class="c" style="left:38px;width:80px;letter-spacing:-0.60px">09:14:22.779</div><div class="c" style="left:118px;width:104px;letter-spacing:-0.23px">MS Poolsteuerung</div><div class="c" style="left:222px;width:150px;letter-spacing:0.03px">iQntrol salt modbus</div><div class="c" style="left:372px;width:89px;letter-spacing:-0.60px">10</div><div class="c" style="left:461px;width:200px;letter-spacing:-0.28px">4 - Read Input Register (0x04)</div><div class="c" style="left:661px;width:250px;letter-spacing:0.01px">Keine Antwort</div><div class="c" style="left:911px;width:100px"></div><div class="c" style="left:1011px;width:70px;letter-spacing:-0.60px">20</div><div class="c" style="left:1081px;width:225px;letter-spacing:-0.16px">Salt concentration, ORP Setpoint, Short ...</div><div class="c" style="left:1306px;width:100px"></div><div class="c" style="left:1406px;width:39px;letter-spacing:0.45px">Modbus</div><i></i></div>
<div class="vs"><div style="position:absolute;left:7px;top:754px;width:2px;height:35px;background:#858585;border-radius:1px"></div></div>
<div class="hs"><div style="position:absolute;left:17px;top:7px;width:1161px;height:2px;background:#808080;border-radius:1px"></div></div>
</body></html>
